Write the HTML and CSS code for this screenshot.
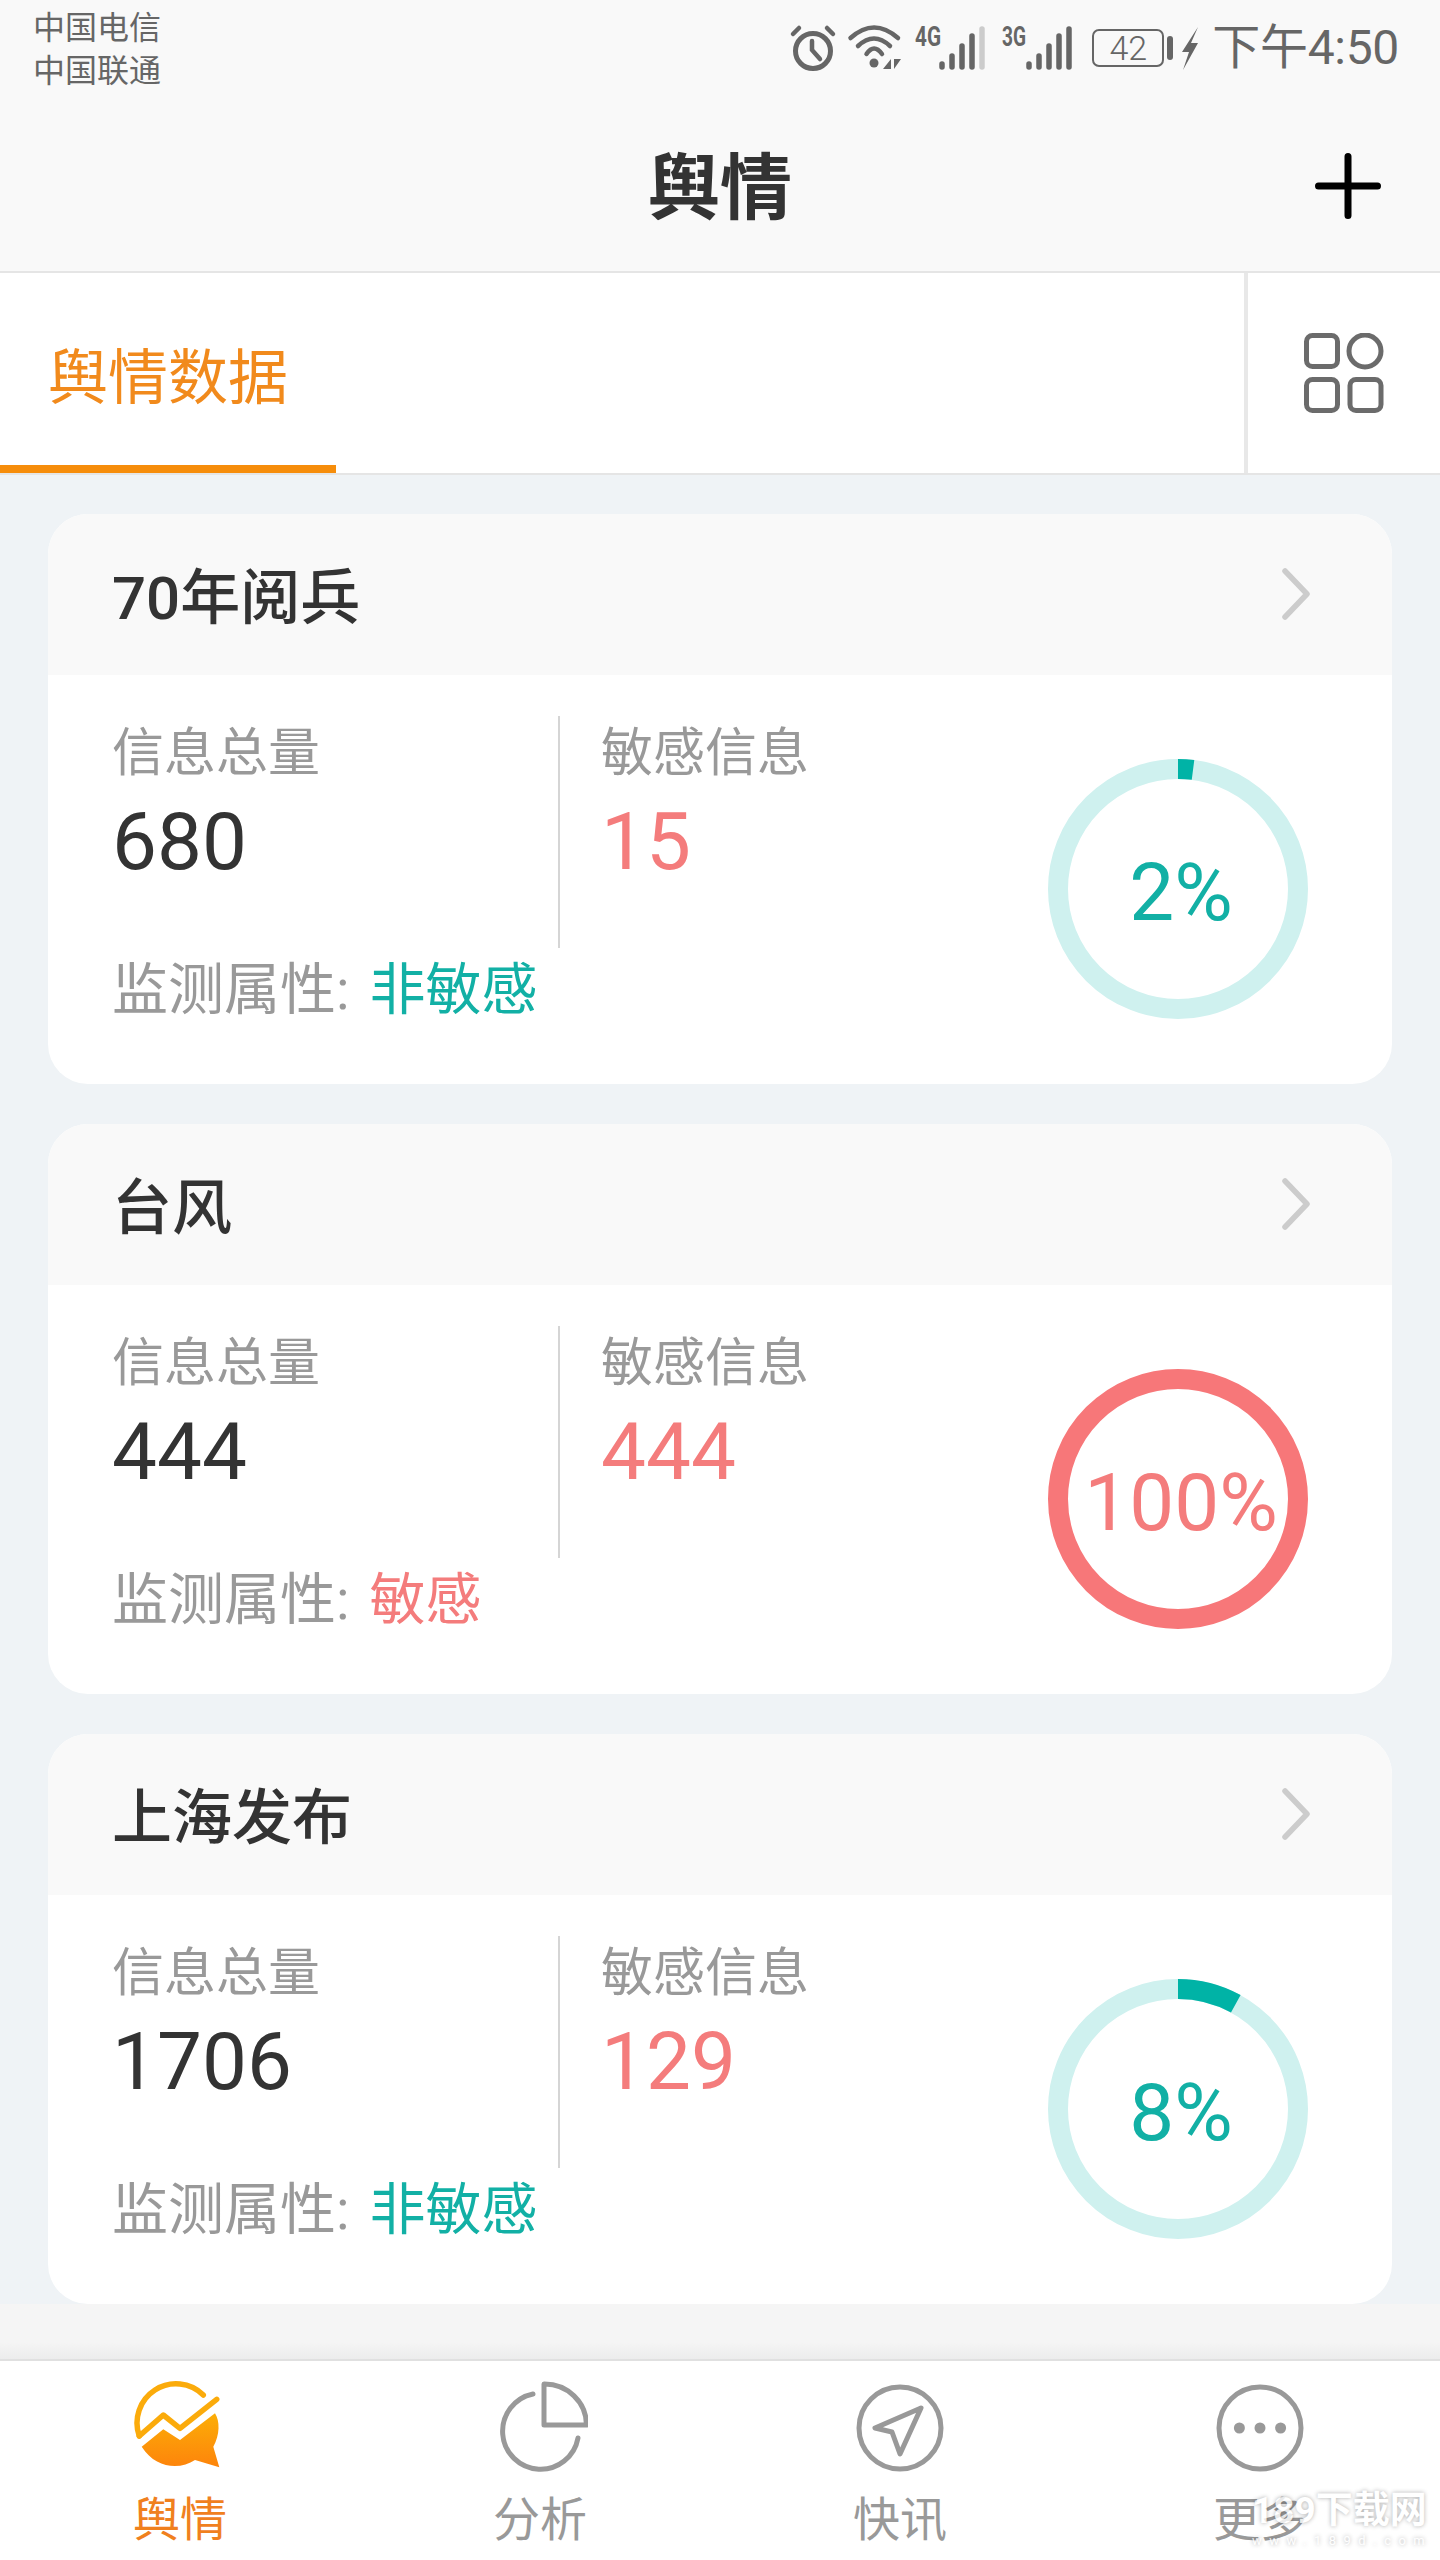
FILE: index.html
```html
<!doctype html>
<html lang="zh-CN">
<head>
    <meta charset="UTF-8">
    <title>舆情</title>
    <link rel="stylesheet" href="styles.css">
</head>
<body>
    <header class="top">
        <div class="status">
            <div class="carrier">
                <div>中国电信</div>
                <div>中国联通</div>
            </div>
            <div class="status-icons">
                <svg class="ic-alarm" width="44" height="45" viewBox="0 0 44 45">
                    <circle cx="22" cy="25" r="17.5" fill="none" stroke="#666" stroke-width="5"/>
                    <path d="M21 15V24L29 33M2 8L8 2M36 2L42 8" fill="none" stroke="#666" stroke-width="4.5" stroke-linecap="round"/>
                </svg>
                <svg class="ic-wifi" width="54" height="44" viewBox="0 0 54 44">
                    <path d="M2.5 12Q26 -9 50 12M10 20Q26 5 42 20M18.5 28Q26 17 34 28" fill="none" stroke="#666" stroke-width="4.5" stroke-linecap="round"/>
                    <circle cx="26" cy="37" r="4.5" fill="#666"/>
                    <path d="M35 43L43 33V43ZM46 33H53L46 43Z" fill="#666"/>
                </svg>
                <svg class="ic-signal" width="70" height="44" viewBox="0 0 70 44">
                    <text class="net" x="0" y="20" font-size="28" textLength="26" lengthAdjust="spacingAndGlyphs">4G</text>
                    <path d="M27 38V41M37 30V41M47 20V41M57 10V41" stroke="#666" stroke-width="5.5" stroke-linecap="round"/>
                    <path d="M67 3V41" stroke="#ccc" stroke-width="5.5" stroke-linecap="round"/>
                </svg>
                <svg class="ic-signal2" width="70" height="44" viewBox="0 0 70 44">
                    <text class="net" x="0" y="20" font-size="28" textLength="24" lengthAdjust="spacingAndGlyphs">3G</text>
                    <path d="M27 38V41M37 30V41M47 20V41M57 10V41M67 3V41" stroke="#666" stroke-width="5.5" stroke-linecap="round"/>
                </svg>
                <div class="battery">42</div>
                <div class="battery-nub"></div>
                <svg class="ic-bolt" width="16" height="43" viewBox="0 0 16 43">
                    <path d="M16 0L0 25H7L1 43L16 16H9Z" fill="#666"/>
                </svg>
                <div class="time">下午4:50</div>
            </div>
        </div>
        <div class="nav">
            <h1>舆情</h1>
            <svg class="ic-plus" width="66" height="66" viewBox="0 0 66 66">
                <path d="M33 3.5V62.5M3.5 33H62.5" stroke="#000" stroke-width="7" stroke-linecap="round"/>
            </svg>
        </div>
    </header>

    <div class="tabs">
        <div class="tab-active">舆情数据</div>
        <div class="tab-grid">
            <svg width="80" height="80" viewBox="0 0 80 80" fill="none" stroke="#6b6b6b" stroke-width="5">
                <rect x="2.5" y="2.5" width="31" height="31" rx="6"/>
                <circle cx="61" cy="18" r="16"/>
                <rect x="2.5" y="46.5" width="31" height="31" rx="6"/>
                <rect x="46" y="46.5" width="31" height="31" rx="6"/>
            </svg>
        </div>
    </div>

    <main class="list">
        <section class="card">
            <div class="card-head">
                <h2>70年阅兵</h2>
                <svg class="chevron" width="28" height="52" viewBox="0 0 28 52"><path d="M3 3L25 26L3 49" fill="none" stroke="#ccc" stroke-width="5.5" stroke-linecap="round" stroke-linejoin="round"/></svg>
            </div>
            <div class="card-body">
                <div class="info">
                    <div class="stats">
                        <div class="stat stat-total">
                            <div class="label">信息总量</div>
                            <div class="num">680</div>
                        </div>
                        <div class="stat stat-sens">
                            <div class="label">敏感信息</div>
                            <div class="num red">15</div>
                        </div>
                    </div>
                    <div class="attr">监测属性: <span class="teal">非敏感</span></div>
                </div>
                <div class="ring">
                    <svg width="260" height="260" viewBox="0 0 260 260">
                        <circle cx="130" cy="130" r="120" fill="none" stroke="#cff1ef" stroke-width="20"/>
                        <circle cx="130" cy="130" r="120" fill="none" stroke="#00b3a6" stroke-width="20" stroke-dasharray="15.1 754" transform="rotate(-90 130 130)"/>
                    </svg>
                    <span class="ring-text teal">2%</span>
                </div>
            </div>
        </section>

        <section class="card">
            <div class="card-head">
                <h2>台风</h2>
                <svg class="chevron" width="28" height="52" viewBox="0 0 28 52"><path d="M3 3L25 26L3 49" fill="none" stroke="#ccc" stroke-width="5.5" stroke-linecap="round" stroke-linejoin="round"/></svg>
            </div>
            <div class="card-body">
                <div class="info">
                    <div class="stats">
                        <div class="stat stat-total">
                            <div class="label">信息总量</div>
                            <div class="num">444</div>
                        </div>
                        <div class="stat stat-sens">
                            <div class="label">敏感信息</div>
                            <div class="num red">444</div>
                        </div>
                    </div>
                    <div class="attr">监测属性: <span class="red">敏感</span></div>
                </div>
                <div class="ring">
                    <svg width="260" height="260" viewBox="0 0 260 260">
                        <circle cx="130" cy="130" r="120" fill="none" stroke="#f77779" stroke-width="20"/>
                    </svg>
                    <span class="ring-text red">100%</span>
                </div>
            </div>
        </section>

        <section class="card">
            <div class="card-head">
                <h2>上海发布</h2>
                <svg class="chevron" width="28" height="52" viewBox="0 0 28 52"><path d="M3 3L25 26L3 49" fill="none" stroke="#ccc" stroke-width="5.5" stroke-linecap="round" stroke-linejoin="round"/></svg>
            </div>
            <div class="card-body">
                <div class="info">
                    <div class="stats">
                        <div class="stat stat-total">
                            <div class="label">信息总量</div>
                            <div class="num">1706</div>
                        </div>
                        <div class="stat stat-sens">
                            <div class="label">敏感信息</div>
                            <div class="num red">129</div>
                        </div>
                    </div>
                    <div class="attr">监测属性: <span class="teal">非敏感</span></div>
                </div>
                <div class="ring">
                    <svg width="260" height="260" viewBox="0 0 260 260">
                        <circle cx="130" cy="130" r="120" fill="none" stroke="#cff1ef" stroke-width="20"/>
                        <circle cx="130" cy="130" r="120" fill="none" stroke="#00b3a6" stroke-width="20" stroke-dasharray="60.3 754" transform="rotate(-90 130 130)"/>
                    </svg>
                    <span class="ring-text teal">8%</span>
                </div>
            </div>
        </section>
    </main>

    <div class="under"></div>

    <nav class="bottom">
        <div class="item active">
            <svg width="96" height="96" viewBox="2 1 96 96">
                <defs>
                    <linearGradient id="orange" x1="0" y1="0" x2="0" y2="1">
                        <stop offset="0" stop-color="#fcae06"/>
                        <stop offset="1" stop-color="#fd840c"/>
                    </linearGradient>
                </defs>
                <path d="M9.3 59A39 39 0 0 1 73.3 18" fill="none" stroke="#fbab0b" stroke-width="5.5" stroke-linecap="round"/>
                <path d="M9.3 59L33.3 38L50 51.3L86.7 22.3" fill="none" stroke="#fbab0b" stroke-width="5.5" stroke-linecap="round" stroke-linejoin="round"/>
                <path d="M11.7 69.7L33.3 52.3L50 63L85 36.3C90 44 90 58 83.3 69.7L89.3 90.3L65 83C50 93 26 92 11.7 69.7Z" fill="url(#orange)"/>
            </svg>
            <span>舆情</span>
        </div>
        <div class="item">
            <svg width="96" height="96" viewBox="-4 -2 96 96" fill="none" stroke="#999" stroke-width="5">
                <path d="M37 14A38 38 0 1 0 82 58" stroke-linecap="round"/>
                <path d="M48 4V45H90.5A42 41 0 0 0 48 4Z" stroke-linejoin="round"/>
            </svg>
            <span>分析</span>
        </div>
        <div class="item">
            <svg width="96" height="96" viewBox="0 0 96 96" fill="none" stroke="#999" stroke-width="5">
                <circle cx="48" cy="50" r="41"/>
                <path d="M69 30L23 50L40 54L48 76Z" stroke-linejoin="round"/>
            </svg>
            <span>快讯</span>
        </div>
        <div class="item">
            <svg width="96" height="96" viewBox="0 0 96 96">
                <circle cx="48" cy="50" r="41" fill="none" stroke="#999" stroke-width="5"/>
                <circle cx="27.4" cy="50" r="5.5" fill="#999"/>
                <circle cx="48" cy="50" r="5.5" fill="#999"/>
                <circle cx="68.6" cy="50" r="5.5" fill="#999"/>
            </svg>
            <span>更多</span>
        </div>
    </nav>

    <div class="watermark">
        <div class="wm-big">189下载网</div>
        <div class="wm-small">www.189d.com</div>
    </div>
</body>
</html>
```

FILE: styles.css
```css
* {
    margin: 0;
    padding: 0;
    box-sizing: border-box;
}

body {
    width: 1440px;
    height: 2560px;
    position: relative;
    overflow: hidden;
    display: flex;
    flex-direction: column;
    background: #fff;
    color: #333;
    font-family: Roboto, "Noto Sans CJK SC", sans-serif;
}

/* 顶部状态栏 + 标题栏 */
.top {
    background: #f9f9f9;
    border-bottom: 2px solid #e5e5e5;
}

.status {
    height: 100px;
    padding: 7px 41px 0 33px;
    display: flex;
    justify-content: space-between;
    align-items: flex-start;
}

.carrier {
    font-size: 32px;
    line-height: 43px;
    color: #666;
}

.status-icons {
    height: 82px;
    display: flex;
    align-items: center;
    color: #666;
}

.status-icons svg {
    display: block;
    overflow: visible;
}

.net {
    font-family: Roboto, sans-serif;
    font-weight: 700;
    fill: #666;
}

.ic-wifi,
.ic-signal {
    margin-left: 13px;
}

.ic-signal2 {
    margin-left: 17px;
}

.battery {
    width: 72px;
    height: 38px;
    margin-left: 20px;
    border: 2px solid #666;
    border-radius: 7px;
    font-size: 34px;
    font-weight: 300;
    line-height: 34px;
    text-align: center;
}

.battery-nub {
    width: 6px;
    height: 24px;
    margin-left: 3px;
    border-radius: 3px;
    background: #666;
}

.ic-bolt {
    margin-left: 9px;
}

.time {
    margin-left: 14px;
    font-size: 48px;
    line-height: 60px;
    font-weight: 400;
    letter-spacing: -0.3px;
}

.nav {
    height: 171px;
    position: relative;
    display: flex;
    justify-content: center;
    align-items: center;
}

.nav h1 {
    margin-top: 6px;
    font-size: 72px;
    font-weight: 700;
    line-height: 90px;
}

.ic-plus {
    position: absolute;
    right: 59px;
    top: 53px;
}

/* 标签栏 */
.tabs {
    height: 202px;
    display: flex;
    justify-content: space-between;
    background: #fff;
    border-bottom: 2px solid #e5e5e5;
}

.tab-active {
    width: 336px;
    height: 200px;
    padding: 10px 0 0 48px;
    border-bottom: 8px solid #f68d0b;
    font-size: 60px;
    line-height: 192px;
    color: #f18a1c;
}

.tab-grid {
    width: 196px;
    border-left: 4px solid #e8e8e8;
    display: flex;
    align-items: center;
    padding-left: 56px;
}

/* 卡片列表 */
.list {
    height: 1829px;
    padding: 39px 48px 0;
    display: flex;
    flex-direction: column;
    gap: 40px;
    background: #eff3f6;
}

.card {
    height: 570px;
    border-radius: 40px;
    background: #fff;
    overflow: hidden;
}

.card-head {
    height: 161px;
    padding: 0 82px 0 64px;
    display: flex;
    justify-content: space-between;
    align-items: center;
    background: #f9f9f9;
}

.card-head h2 {
    margin-top: 8px;
    font-size: 60px;
    font-weight: 500;
    line-height: 80px;
}

.chevron {
    margin-bottom: 2px;
}

.card-body {
    height: 409px;
    padding: 41px 84px 0 64px;
    display: flex;
    justify-content: space-between;
}

.stats {
    height: 232px;
    display: flex;
}

.stat {
    padding-top: 2px;
}

.stat-total {
    width: 448px;
    border-right: 2px solid #d5d5d5;
}

.stat-sens {
    padding-left: 41px;
}

.label {
    font-size: 52px;
    line-height: 72px;
    color: #999;
}

.num {
    font-size: 80px;
    line-height: 104px;
    color: #333;
}

.attr {
    margin-top: 6px;
    font-size: 56px;
    line-height: 72px;
    color: #999;
}

.attr span {
    margin-left: 6px;
}

.red {
    color: #f47c7c;
}

.teal {
    color: #12b0a5;
}

.ring {
    width: 260px;
    height: 260px;
    margin-top: 43px;
    display: grid;
    place-items: center;
}

.ring svg,
.ring-text {
    grid-area: 1 / 1;
}

.ring svg {
    display: block;
}

.ring-text {
    font-size: 80px;
    line-height: 90px;
    padding-left: 6px;
    padding-top: 8px;
}

/* 底部导航 */
.under {
    height: 55px;
    background: linear-gradient(to bottom, #f5f5f5 70%, #ececec 100%);
}

.bottom {
    flex: 1;
    display: grid;
    grid-template-columns: repeat(4, 360px);
    border-top: 2px solid #e0e0e0;
    background: #fff;
}

.item {
    padding-top: 17px;
    display: flex;
    flex-direction: column;
    align-items: center;
    font-size: 47px;
    line-height: 60px;
    color: #999;
}

.item svg {
    display: block;
    margin-bottom: 16px;
}

.item.active {
    color: #f0801e;
}

/* 水印 */
.watermark {
    position: absolute;
    left: 1252px;
    top: 2490px;
    color: #fff;
    text-shadow: 0 0 4px rgba(0, 0, 0, 0.4);
}

.wm-big {
    font-size: 37px;
    font-weight: 700;
    line-height: 42px;
    white-space: nowrap;
    opacity: 0.8;
}

.wm-small {
    margin-top: 2px;
    font-size: 13px;
    line-height: 14px;
    letter-spacing: 7.5px;
    white-space: nowrap;
    opacity: 0.8;
}
```
